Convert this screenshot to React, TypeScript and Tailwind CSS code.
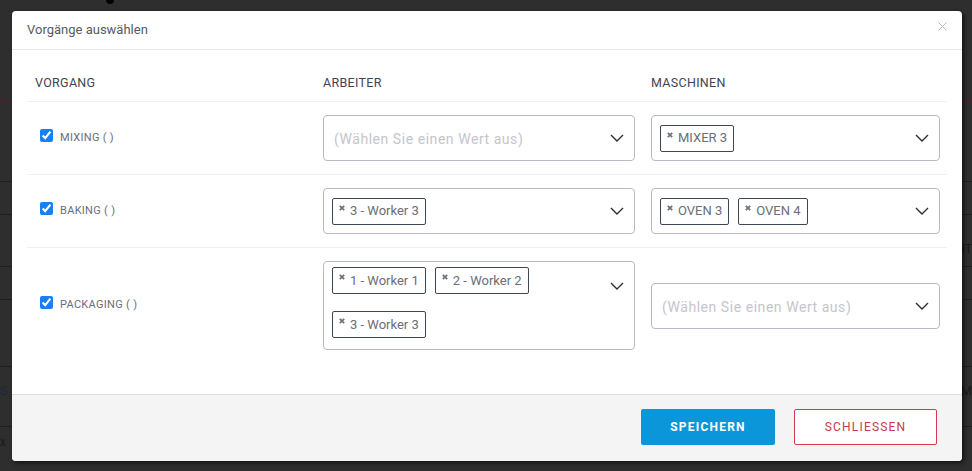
import { X } from "lucide-react";

const FONT = { fontFamily: "Roboto, 'Noto Sans', sans-serif" };

type Row = {
  name: string;
  workers: string[];
  machines: string[];
};

const ROWS: Row[] = [
  { name: "MIXING ( )", workers: [], machines: ["MIXER 3"] },
  { name: "BAKING ( )", workers: ["3 - Worker 3"], machines: ["OVEN 3", "OVEN 4"] },
  {
    name: "PACKAGING ( )",
    workers: ["1 - Worker 1", "2 - Worker 2", "3 - Worker 3"],
    machines: [],
  },
];

function Chevron() {
  return (
    <svg width="14" height="8" viewBox="0 0 14 8" className="shrink-0">
      <polyline points="1,1 7,7 13,1" fill="none" stroke="#2b2f38" strokeWidth="1.4" />
    </svg>
  );
}

function Tag({ label }: { label: string }) {
  return (
    <div className="flex h-[27px] items-start gap-[5px] rounded-[2px] border border-[#3f4656] pl-[6px] pr-[6px]">
      <svg width="6" height="6" viewBox="0 0 6 6" className="mt-[6px] shrink-0">
        <path d="M0.8 0.8 L5.2 5.2 M5.2 0.8 L0.8 5.2" stroke="#6f737c" strokeWidth="1.8" />
      </svg>
      <span className="self-center text-[13px] text-[#6a6e78]">{label}</span>
    </div>
  );
}

function MultiSelect({ values }: { values: string[] }) {
  const wraps = values.length > 2;
  return (
    <div
      className={
        wraps
          ? "flex h-[89px] items-start rounded-[4px] border border-[#b9bac2] bg-white pl-[8px] pr-[10px] pt-[5px]"
          : "flex h-[46px] items-center rounded-[4px] border border-[#b9bac2] bg-white pl-[8px] pr-[10px]"
      }
    >
      <div className="flex flex-1 flex-wrap gap-x-[9px] gap-y-[17px]">
        {values.length === 0 ? (
          <span className="pl-[2px] pt-[3px] text-[14px] tracking-[0.55px] text-[#c4c5cc]">
            (Wählen Sie einen Wert aus)
          </span>
        ) : (
          values.map((v) => <Tag key={v} label={v} />)
        )}
      </div>
      <div className={wraps ? "mt-[15px]" : ""}>
        <Chevron />
      </div>
    </div>
  );
}

function Background() {
  return (
    <div className="flex h-[471px] flex-col bg-[#2e2e2e]">
      <div className="h-[28px] border-b border-[#4a2424]">
        <div className="ml-[106px] -mt-[4px] h-[8px] w-[8px] rounded-full bg-black" />
      </div>
      <div className="h-[73px] border-b border-[#4a2424]" />
      <div className="h-[81px] border-b border-[#1f1f1f]" />
      <div className="h-[33px] border-b border-[#1f1f1f]" />
      <div className="flex h-[52px] items-end justify-end border-b border-[#1f1f1f] pb-[8px] text-[12px] text-[#1b1b1b]">
        HT
      </div>
      <div className="h-[33px] border-b border-[#1f1f1f]" />
      <div className="h-[67px] border-b border-[#1f1f1f]" />
      <div className="flex h-[60px] items-center justify-between border-b border-[#1f1f1f] pb-[12px] text-[13px]">
        <span className="text-[#1c2a3a]">S</span>
        <span className="text-[#1b1b1b]">EM</span>
      </div>
      <div className="pt-[6px] text-[12px] text-[#1b1b1b]">x</div>
    </div>
  );
}

export default function App() {
  return (
    <div className="relative h-[471px] w-[972px] overflow-hidden" style={FONT}>
      <Background />

      {/* Modal */}
      <div className="absolute left-[12px] top-[11px] flex h-[450px] w-[950px] flex-col overflow-hidden rounded-[4px] bg-white shadow-[2px_2px_4px_rgba(0,0,0,0.6)]">
        {/* Header */}
        <div className="flex h-[39px] items-center justify-between border-b border-[#e8e8e8] pl-[15px] pr-[12px]">
          <span className="text-[13px] text-[#555a62]">Vorgänge auswählen</span>
          <X size={15} strokeWidth={1.5} color="#b4b4b4" className="-mt-[8px]" />
        </div>

        {/* Table */}
        <div className="flex-1 px-[15px] pt-[16px]">
          <div className="grid h-[36px] grid-cols-[288px_328px_1fr] items-center border-b border-[#f0f0f2] text-[12.5px] tracking-[0.3px] text-[#3f4552]">
            <div className="pl-[8px]">VORGANG</div>
            <div className="pl-[8px]">ARBEITER</div>
            <div className="pl-[8px]">MASCHINEN</div>
          </div>

          {ROWS.map((row, i) => (
            <div
              key={row.name}
              className={
                "grid grid-cols-[288px_328px_1fr] items-center py-[13px] " +
                (i < ROWS.length - 1 ? "border-b border-[#f0f0f2]" : "")
              }
            >
              <div className="flex items-center gap-[7px] pl-[13px]">
                <input
                  type="checkbox"
                  checked
                  readOnly
                  className="-mt-[6px] h-[13px] w-[13px] accent-[#1a7ff0]"
                />
                <span className="text-[11px] tracking-[0.3px] text-[#6b6e7a]">{row.name}</span>
              </div>
              <div className="pl-[8px] pr-[8px]">
                <MultiSelect values={row.workers} />
              </div>
              <div className="pl-[8px] pr-[7px]">
                <MultiSelect values={row.machines} />
              </div>
            </div>
          ))}
        </div>

        {/* Footer */}
        <div className="flex h-[67px] shrink-0 items-start justify-end gap-[19px] border-t border-[#dedede] bg-[#f4f4f4] pr-[25px] pt-[14px]">
          <button className="h-[36px] w-[134px] rounded-[2px] bg-[#0a96d8] text-[12px] font-bold tracking-[1.2px] text-white">
            SPEICHERN
          </button>
          <button className="h-[36px] w-[143px] rounded-[2px] border border-[#d43a4c] bg-white text-[12px] tracking-[1.2px] text-[#c8394b]">
            SCHLIESSEN
          </button>
        </div>
      </div>
    </div>
  );
}
